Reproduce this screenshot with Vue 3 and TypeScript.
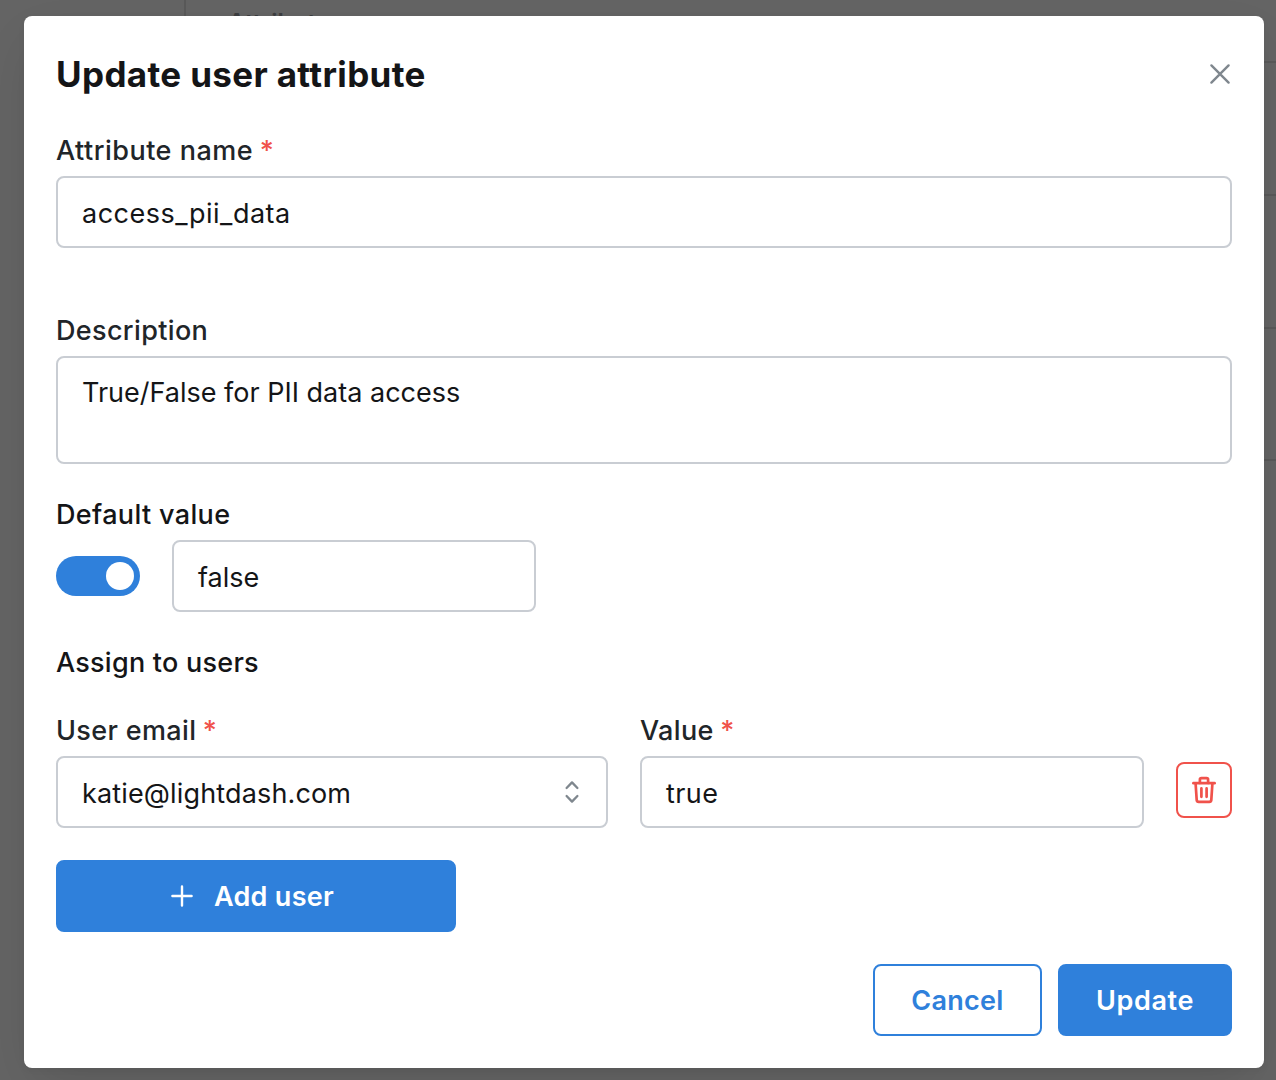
<script setup lang="ts">
import { ref } from 'vue'

const name = ref('access_pii_data')
const description = ref('True/False for PII data access')
const useDefault = ref(true)
const defaultValue = ref('false')
const users = ref([{ email: 'katie@lightdash.com', value: 'true' }])
</script>

<template>
  <div class="page">
    <div class="backdrop">
      <aside class="side"></aside>
      <div class="table">
        <div class="thead"><span>Attribute</span></div>
        <div v-for="n in 3" :key="n" class="trow"></div>
      </div>
    </div>

    <section class="modal" role="dialog">
      <header class="head">
        <h2 class="title">Update user attribute</h2>
        <svg class="close" viewBox="0 0 22 22" fill="none" stroke="#7f878e" stroke-width="2.4" stroke-linecap="round">
          <path d="M2.4 2.4L19.6 19.6M19.6 2.4L2.4 19.6" />
        </svg>
      </header>

      <div class="field name-field">
        <label class="label wide">Attribute name <span class="req">*</span></label>
        <div class="input name-input">{{ name }}</div>
      </div>

      <div class="field desc-field">
        <label class="label">Description</label>
        <div class="input area">{{ description }}</div>
      </div>

      <div class="field default-field">
        <div class="label dark">Default value</div>
        <div class="default-row">
          <div class="switch" :class="{ on: useDefault }"><i class="thumb"></i></div>
          <div class="input default-input">{{ defaultValue }}</div>
        </div>
      </div>

      <div class="label dark assign">Assign to users</div>

      <div v-for="user in users" :key="user.email" class="user-row">
        <div class="field email">
          <label class="label">User email <span class="req">*</span></label>
          <div class="input select">
            <span>{{ user.email }}</span>
            <svg class="chevrons" viewBox="0 0 16 24" fill="none" stroke="#7f878e" stroke-width="2.3" stroke-linecap="round" stroke-linejoin="round">
              <path d="M2.6 8L8 2.4L13.4 8M2.6 16L8 21.6L13.4 16" />
            </svg>
          </div>
        </div>
        <div class="field value">
          <label class="label">Value <span class="req">*</span></label>
          <div class="input value-input">{{ user.value }}</div>
        </div>
        <button class="trash">
          <svg viewBox="0 0 28 28" fill="none" stroke="#f0524b" stroke-width="2.7" stroke-linecap="round" stroke-linejoin="round">
            <path d="M3.4 7.2H24.6" />
            <path d="M9.9 7V3.7Q9.9 2.2 11.4 2.2H16.6Q18.1 2.2 18.1 3.7V7" />
            <path d="M5.6 7.5L6.7 24Q6.9 25.8 8.7 25.8H19.3Q21.1 25.8 21.3 24L22.4 7.5" />
            <path d="M11.4 12.4V20.8M16.6 12.4V20.8" />
          </svg>
        </button>
      </div>

      <button class="btn add">
        <svg class="plus" viewBox="0 0 24 24" fill="none" stroke="#fff" stroke-width="2.4" stroke-linecap="round">
          <path d="M12 2.4V21.6M2.4 12H21.6" />
        </svg>
        <span>Add user</span>
      </button>

      <footer class="actions">
        <button class="btn outline">Cancel</button>
        <button class="btn update">Update</button>
      </footer>
    </section>
  </div>
</template>

<style>
body {
  margin: 0;
  overflow: hidden;
}
</style>

<style scoped>
* {
  box-sizing: border-box;
}
.page {
  position: relative;
  width: 1276px;
  height: 1080px;
  padding: 16px 12px 12px 24px;
  overflow: hidden;
  background: #646464;
  font-family: Inter, sans-serif;
  font-size: 27px;
  color: #141517;
}
.backdrop {
  position: absolute;
  inset: 0;
  display: flex;
}
.side {
  width: 186px;
  height: 1060px;
  border-right: 2px solid #595959;
}
.table {
  flex: 1;
}
.thead {
  height: 63px;
  padding: 8px 0 0 42px;
  border-bottom: 2px solid #595959;
  font-size: 24px;
  line-height: 30px;
  font-weight: 600;
  letter-spacing: 0.1px;
  color: #3c3e40;
}
.trow {
  height: 133px;
  border-bottom: 2px solid #595959;
}
.trow:last-child {
  height: 132px;
}
.modal {
  position: relative;
  width: 1240px;
  height: 1052px;
  padding: 32px;
  border-radius: 8px;
  background: #fff;
  box-shadow: 0 2px 6px rgba(0, 0, 0, 0.05), 0 20px 50px -10px rgba(0, 0, 0, 0.12);
}
.head {
  display: flex;
  align-items: center;
  justify-content: space-between;
  height: 52px;
  padding-right: 1px;
}
.title {
  margin: 0;
  font-size: 35px;
  line-height: 52px;
  font-weight: 700;
  letter-spacing: 0.35px;
}
.close {
  width: 22px;
  height: 22px;
}
.label {
  display: block;
  height: 44px;
  margin-bottom: 4px;
  padding-top: 1px;
  line-height: 44px;
  font-weight: 500;
  letter-spacing: 0.35px;
  color: #212529;
  white-space: nowrap;
}
.wide {
  letter-spacing: 0.5px;
}
.dark {
  color: #141517;
}
.req {
  margin-left: -1px;
  color: #f0524b;
}
.input {
  display: flex;
  align-items: center;
  height: 72px;
  padding: 3px 24px 0;
  border: 2px solid #c9cdd3;
  border-radius: 8px;
  background: #fff;
  white-space: nowrap;
}
.name-field {
  margin-top: 28px;
}
.name-input {
  letter-spacing: 0.5px;
}
.desc-field {
  margin-top: 60px;
}
.area {
  align-items: flex-start;
  height: 108px;
  padding-top: 13px;
  line-height: 44px;
}
.default-field {
  margin-top: 28px;
}
.default-row {
  display: flex;
  align-items: center;
  gap: 32px;
}
.switch {
  display: flex;
  align-items: center;
  width: 84px;
  height: 40px;
  padding: 0 6px;
  border-radius: 20px;
  background: #ced4da;
}
.switch.on {
  justify-content: flex-end;
  background: #2f80db;
}
.thumb {
  width: 28px;
  height: 28px;
  border-radius: 50%;
  background: #fff;
}
.default-input {
  width: 364px;
}
.assign {
  margin-top: 28px;
  margin-bottom: 24px;
  letter-spacing: 0.25px;
}
.user-row {
  display: flex;
  align-items: flex-end;
  gap: 32px;
}
.email {
  width: 552px;
}
.value {
  width: 504px;
}
.value-input {
  letter-spacing: 0.4px;
}
.select {
  justify-content: space-between;
  padding-right: 26px;
  letter-spacing: 0.15px;
}
.chevrons {
  width: 16px;
  height: 24px;
  margin-top: -3px;
}
.trash {
  display: flex;
  align-items: center;
  justify-content: center;
  width: 56px;
  height: 56px;
  margin: 0 0 10px;
  padding: 0;
  border: 2px solid #f0524b;
  border-radius: 8px;
  background: #fff;
}
.trash svg {
  width: 28px;
  height: 28px;
}
.btn {
  display: flex;
  align-items: center;
  justify-content: center;
  height: 72px;
  padding: 1px 0 0;
  border: 2px solid #2f80db;
  border-radius: 8px;
  background: #2f80db;
  color: #fff;
  font-family: inherit;
  font-size: 27px;
  font-weight: 600;
  letter-spacing: 0.3px;
}
.add {
  width: 400px;
  margin-top: 32px;
  padding-right: 8px;
  gap: 20px;
}
.plus {
  width: 24px;
  height: 24px;
  margin-top: -1px;
}
.actions {
  display: flex;
  justify-content: flex-end;
  gap: 16px;
  margin-top: 32px;
}
.outline {
  width: 169px;
  background: #fff;
  color: #2f80db;
}
.update {
  width: 174px;
  letter-spacing: 0.65px;
}
</style>
